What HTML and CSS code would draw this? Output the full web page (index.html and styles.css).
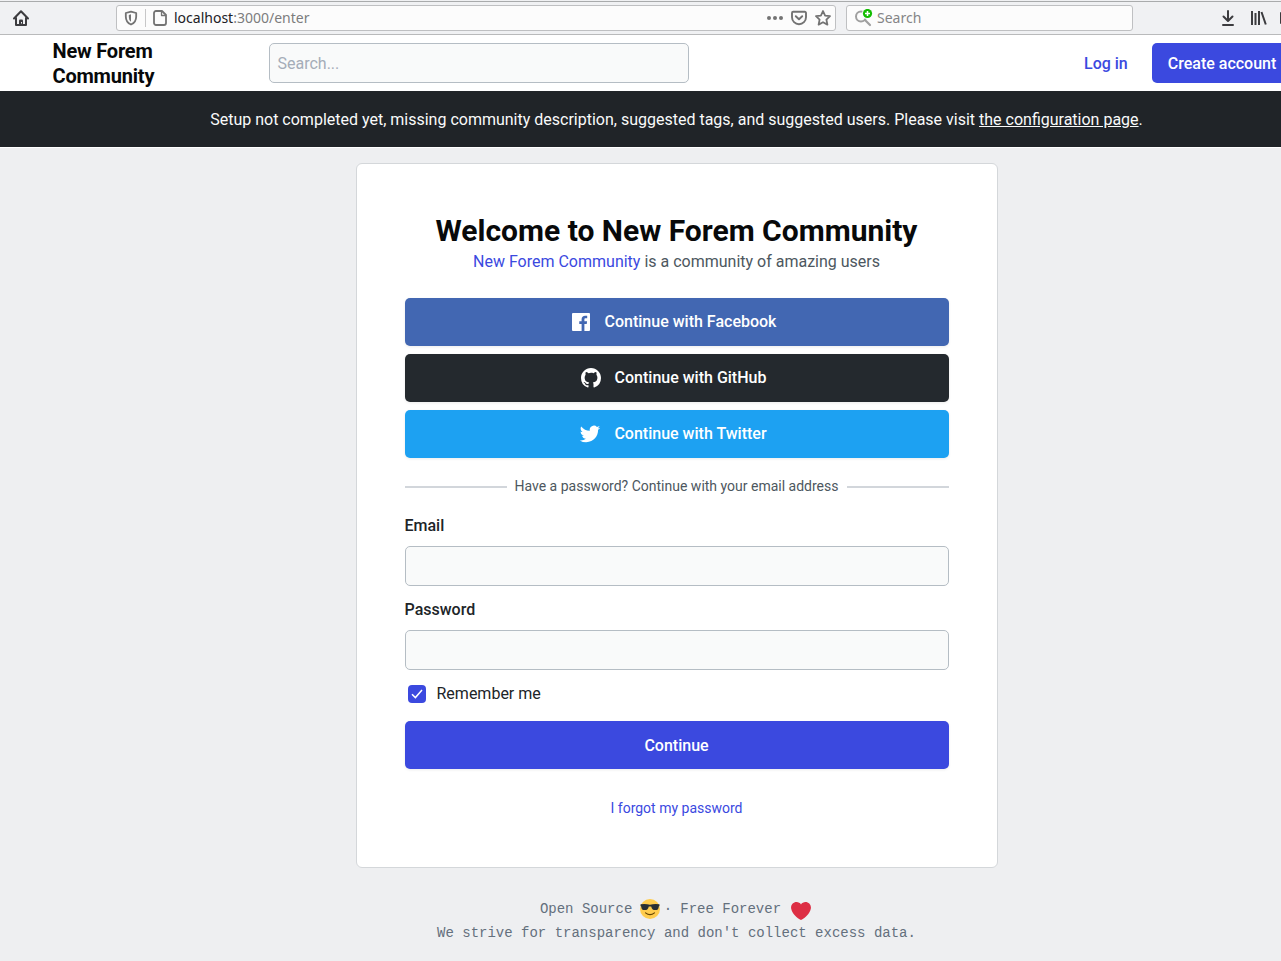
FILE: index.html
```html
<!DOCTYPE html>
<html lang="en">
<head>
<meta charset="utf-8">
<title>Welcome to New Forem Community</title>
<link rel="stylesheet" href="styles.css">
</head>
<body>
<div class="toolbar">
  <svg class="home" width="18" height="18" viewBox="0 0 18 18"><path d="M2 9.500 9 2.300l7 7.200M4 9v7h10V9" fill="none" stroke="#3c3c3f" stroke-width="2" stroke-linecap="round" stroke-linejoin="round"/><path d="M7 16v-4.500a1 1 0 0 1 1-1h2a1 1 0 0 1 1 1V16z" fill="#3c3c3f"/><path d="M9 13h1v1.500H9z" fill="#f0f1f3"/></svg>
  <div class="urlbar">
    <svg class="shield" width="14" height="16" viewBox="0 0 14 16" fill="none" stroke="#737373" stroke-width="1.800" stroke-linejoin="round"><path d="M7 1.600 12.200 3v3.500c0 4-1.600 6.500-5.200 8-3.600-1.500-5.200-4-5.200-8V3z"/><path d="M7 4.200v7.600C5.300 10.500 4.800 9 4.800 5z" fill="#737373" stroke="none"/></svg>
    <span class="divider"></span>
    <svg class="page-icon" width="14" height="16" viewBox="0 0 14 16" fill="none" stroke="#737373" stroke-width="1.800" stroke-linejoin="round"><path d="M3 1h6l4 4v8a2 2 0 0 1-2 2H3a2 2 0 0 1-2-2V3a2 2 0 0 1 2-2z"/><path d="M8.500 1v4.500H13" stroke-width="1.300"/></svg>
    <span class="address">localhost<span class="dim">:3000/enter</span></span>
    <svg class="dots" width="16" height="16" viewBox="0 0 16 16" fill="#737373"><circle cx="2" cy="8" r="2"/><circle cx="8" cy="8" r="2"/><circle cx="14" cy="8" r="2"/></svg>
    <svg class="pocket" width="16" height="16" viewBox="0 0 16 16" fill="none" stroke="#737373" stroke-width="1.900" stroke-linecap="round" stroke-linejoin="round"><path d="M2.200 1.800h11.600a1.200 1.200 0 0 1 1.200 1.200v4.200a7 7 0 0 1-14 0V3a1.200 1.200 0 0 1 1.200-1.200z"/><path d="m4.800 6.200 3.200 3 3.200-3"/></svg>
    <svg class="star" width="16" height="16" viewBox="0 0 16 16" fill="none" stroke="#737373" stroke-width="1.800" stroke-linejoin="round"><path d="m8 1 2.100 4.600 4.900.6-3.600 3.400 1 5L8 12.200l-4.400 2.400 1-5L1 6.200l4.900-.6z"/></svg>
  </div>
  <div class="searchbar">
    <svg width="18" height="18" viewBox="0 0 18 18"><circle cx="6" cy="7.500" r="5" fill="none" stroke="#a0a0a0" stroke-width="2"/><path d="m10 11 5 5" stroke="#a0a0a0" stroke-width="2.200" stroke-linecap="round"/><circle cx="12.500" cy="4.500" r="5.500" fill="#fbfbfb"/><circle cx="12.500" cy="4.500" r="4.600" fill="#12bc00"/><path d="M12.500 2v5M10 4.500h5" stroke="#fff" stroke-width="1.500"/></svg>
    <span>Search</span>
  </div>
  <svg class="download" width="14" height="16" viewBox="0 0 14 16" fill="none" stroke="#3c3c3f" stroke-width="2" stroke-linecap="round" stroke-linejoin="round"><path d="M7 1v9.500M2.500 6.500 7 11l4.500-4.500M2 15h10"/></svg>
  <svg class="library" width="16" height="14" viewBox="0 0 16 14" fill="none" stroke="#3c3c3f" stroke-width="2"><path d="M1 0v14M4.500 2v12M8 0v14M10.500 1l4.300 12.500"/></svg>
  <span class="sidebar-edge"></span>
</div>
<header class="site-header">
  <a class="logo">New Forem<br>Community</a>
  <div class="site-search">Search...</div>
  <a class="login">Log in</a>
  <a class="create">Create account</a>
</header>
<div class="banner"><p>Setup not completed yet, missing community description, suggested tags, and suggested users. Please visit <a>the configuration page</a>.</p></div>
<main class="page">
  <section class="card">
    <h1>Welcome to New Forem Community</h1>
    <p class="tagline"><a>New Forem Community</a> is a community of amazing users</p>
    <div class="providers">
      <a class="btn facebook"><svg width="24" height="24" viewBox="0 0 24 24" fill="#fff"><path d="M15.402 21v-6.966h2.333l.349-2.708h-2.682V9.598c0-.784.218-1.319 1.342-1.319h1.434V5.857a19.190 19.190 0 0 0-2.090-.107c-2.067 0-3.482 1.262-3.482 3.580v1.996h-2.338v2.708h2.338V21H4a1 1 0 0 1-1-1V4a1 1 0 0 1 1-1h16a1 1 0 0 1 1 1v16a1 1 0 0 1-1 1h-4.598z"/></svg>Continue with Facebook</a>
      <a class="btn github"><svg width="24" height="24" viewBox="0 0 24 24" fill="#fff"><path d="M12 2C6.475 2 2 6.475 2 12a9.994 9.994 0 0 0 6.838 9.488c.5.087.687-.213.687-.476 0-.237-.013-1.024-.013-1.862-2.512.463-3.162-.612-3.362-1.175-.113-.288-.600-1.175-1.025-1.413-.350-.187-.850-.650-.013-.662.788-.013 1.350.725 1.538 1.025.900 1.512 2.338 1.087 2.912.825.088-.650.350-1.087.638-1.337-2.225-.250-4.550-1.113-4.550-4.938 0-1.088.387-1.987 1.025-2.688-.100-.250-.450-1.275.100-2.650 0 0 .837-.262 2.750 1.026a9.280 9.280 0 0 1 2.500-.338c.850 0 1.700.112 2.500.337 1.912-1.300 2.750-1.024 2.750-1.024.550 1.375.200 2.400.100 2.650.637.700 1.025 1.587 1.025 2.687 0 3.838-2.337 4.688-4.562 4.938.362.312.675.912.675 1.850 0 1.337-.013 2.412-.013 2.750 0 .262.188.574.688.474A10.016 10.016 0 0 0 22 12c0-5.525-4.475-10-10-10z"/></svg>Continue with GitHub</a>
      <a class="btn twitter"><svg width="24" height="24" viewBox="0 0 24 24" fill="#fff"><path d="M22.162 5.656a8.384 8.384 0 0 1-2.402.658A4.196 4.196 0 0 0 21.600 4c-.820.488-1.719.830-2.656 1.015a4.182 4.182 0 0 0-7.126 3.814 11.874 11.874 0 0 1-8.620-4.370 4.168 4.168 0 0 0-.566 2.103c0 1.450.738 2.731 1.860 3.481a4.168 4.168 0 0 1-1.894-.523v.052a4.185 4.185 0 0 0 3.355 4.101 4.210 4.210 0 0 1-1.890.072A4.185 4.185 0 0 0 7.970 16.650a8.394 8.394 0 0 1-6.191 1.732 11.830 11.830 0 0 0 6.410 1.880c7.693 0 11.900-6.373 11.900-11.900 0-.180-.005-.362-.013-.540a8.496 8.496 0 0 0 2.087-2.165z"/></svg>Continue with Twitter</a>
    </div>
    <div class="separator">Have a password? Continue with your email address</div>
    <form>
      <div class="field"><label for="email">Email</label><input id="email" type="email"></div>
      <div class="field"><label for="password">Password</label><input id="password" type="password"></div>
      <div class="remember"><span class="checkbox"><svg width="12" height="10" viewBox="0 0 12 10" fill="none" stroke="#fff" stroke-width="1.500"><path d="m1 5.200 3.400 3.400L11 1"/></svg></span>Remember me</div>
      <a class="btn continue">Continue</a>
    </form>
    <a class="forgot">I forgot my password</a>
  </section>
  <footer class="footer">
    <p class="motto"><span>Open Source</span>
      <svg class="cool" width="20" height="20" viewBox="0 0 36 36"><circle cx="18" cy="18" r="18" fill="#ffcc4d"/><path d="M10 25q8 6.500 16 0" fill="none" stroke="#664500" stroke-width="2.200" stroke-linecap="round"/><path d="M1 9.500q8.500-1.500 17 .7 8.500-2.200 17-.7v3l-1.200 1c-.6 5.500-2.300 6.500-6.300 6.500-4.500 0-6.500-2-7.300-6.500h-4.400C15 18 13 20 8.500 20c-4 0-5.700-1-6.300-6.500L1 12.500z" fill="#292f33"/></svg>
      <span class="dot">·</span><span class="forever">Free Forever</span>
      <svg class="heart" width="20" height="20" viewBox="0 0 36 36"><path d="M35.885 11.833c0-5.450-4.418-9.868-9.867-9.868-3.308 0-6.227 1.633-8.018 4.129-1.791-2.496-4.710-4.129-8.017-4.129-5.450 0-9.868 4.417-9.868 9.868 0 .772.098 1.520.266 2.241C1.751 22.587 11.216 31.568 18 34.034c6.783-2.466 16.249-11.447 17.617-19.959.170-.721.268-1.469.268-2.242z" fill="#dd2e44"/></svg></p>
    <p>We strive for transparency and don't collect excess data.</p>
  </footer>
</main>
</body>
</html>
```
FILE: styles.css
```css
* { box-sizing: border-box; }
body { margin: 0; height: 961px; overflow: hidden; background: #eeeff1; font: 16px/24px Roboto, sans-serif; color: #202428; }
p, h1 { margin: 0; }
svg { display: block; flex: none; }
.toolbar { height: 35px; padding-left: 12px; display: flex; align-items: center; background: #f0f1f3; border-top: 1px solid #f0f1f3; border-bottom: 1px solid #b9babb; box-shadow: inset 0 1px #a9abac; font-family: "Noto Sans", sans-serif; font-size: 14px; }
.urlbar, .searchbar { height: 26px; display: flex; align-items: center; background: #fcfcfc; border: 1px solid #bfc0c2; border-radius: 3px; flex: none; }
.urlbar { width: 720px; margin-left: 86px; padding: 0 4px 0 7px; }
.divider { width: 1px; height: 18px; margin: 0 7px; background: #c7c7c8; }
.page-icon { margin-right: 7px; }
.address { flex: 1; color: #202024; }
.dim { color: #7c7c7e; }
.dots, .pocket { margin-right: 8px; }
.searchbar { width: 287px; margin-left: 10px; padding-left: 8px; color: #858587; }
.searchbar svg { margin-right: 4px; }
.download { margin-left: 88px; }
.library { margin-left: 16px; }
.sidebar-edge { flex: none; width: 2px; height: 12px; margin-left: 13px; background: #3c3c3f; border-radius: 1px 0 0 1px; }
.site-header { height: 56px; padding-left: 52.5px; display: flex; align-items: center; background: #fff; font-weight: 500; }
.logo { width: 216.5px; padding-top: 2px; flex: none; font-size: 20px; line-height: 25px; letter-spacing: -.2px; font-weight: 700; color: #08090a; }
.site-search { width: 420px; height: 40px; flex: none; padding: 8px 7.5px; border: 1px solid #b5bdc4; border-radius: 5px; background: #f9fafa; color: #a5adb8; font-weight: 400; }
.login { margin-left: 395px; padding-top: 2px; color: #3b49df; white-space: nowrap; }
.create { flex: none; width: 129px; height: 40px; margin-left: 24px; padding: 9px 0 0 16px; border-radius: 5px 0 0 5px; background: #3b49df; color: #fff; white-space: nowrap; }
.banner { height: 57px; padding: 17px 0 0 72px; background: #202428; border-bottom: 1px solid #fff; color: #f9fafa; text-align: center; }
.banner a { text-decoration: underline; }
.page { padding: 15px 0 0 72px; display: flex; flex-direction: column; align-items: center; }
.card { width: 642px; height: 705px; padding: 48px; border: 1px solid #d4d7da; border-radius: 6px; background: #fff; text-align: center; }
h1 { font-size: 30px; line-height: 38px; font-weight: 700; color: #08090a; white-space: nowrap; }
.tagline { color: #4d5760; }
.tagline a, .forgot { color: #3b49df; }
.providers { display: grid; gap: 8px; margin-top: 24px; }
.btn { height: 48px; display: flex; align-items: center; justify-content: center; border-radius: 5px; color: #fff; font-weight: 500; box-shadow: 0 1px 3px rgba(0,0,0,.08); }
.providers .btn { padding-right: 8px; }
.btn svg { margin-right: 12px; }
.facebook { background: #4267b2; }
.github { background: #24292e; }
.twitter { background: #1da1f2; }
.separator { display: flex; align-items: center; gap: 8px; margin-top: 16px; font-size: 14px; color: #4d5760; white-space: nowrap; }
.separator::before, .separator::after { content: ""; flex: 1; height: 2px; margin-top: 1px; background: #d2d6db; }
.field { display: flex; flex-direction: column; gap: 8px; text-align: left; margin-top: 12px; }
.separator + form { margin-top: 16px; }
label { font-weight: 500; }
input { display: block; width: 100%; height: 40px; border: 1px solid #b5bdc4; border-radius: 5px; background: #f9fafa; }
.remember { display: flex; align-items: center; height: 24px; margin-top: 12px; padding-left: 3px; }
.checkbox { width: 18px; height: 18px; margin-right: 11px; display: grid; place-items: center; border-radius: 4px; background: #3b49df; }
.continue { margin-top: 15px; padding-top: 2px; background: #3b49df; }
.forgot { display: block; margin-top: 27px; font-size: 14px; }
.footer { margin-top: 29px; text-align: center; font: 14px/24px "Liberation Mono", monospace; color: #64707d; }
.motto { display: flex; align-items: center; justify-content: center; padding-right: 2px; }
.cool { margin-left: 7.5px; }
.dot { margin: 0 8px 0 4px; }
.heart { margin: 3px 0 0 10px; }
```
